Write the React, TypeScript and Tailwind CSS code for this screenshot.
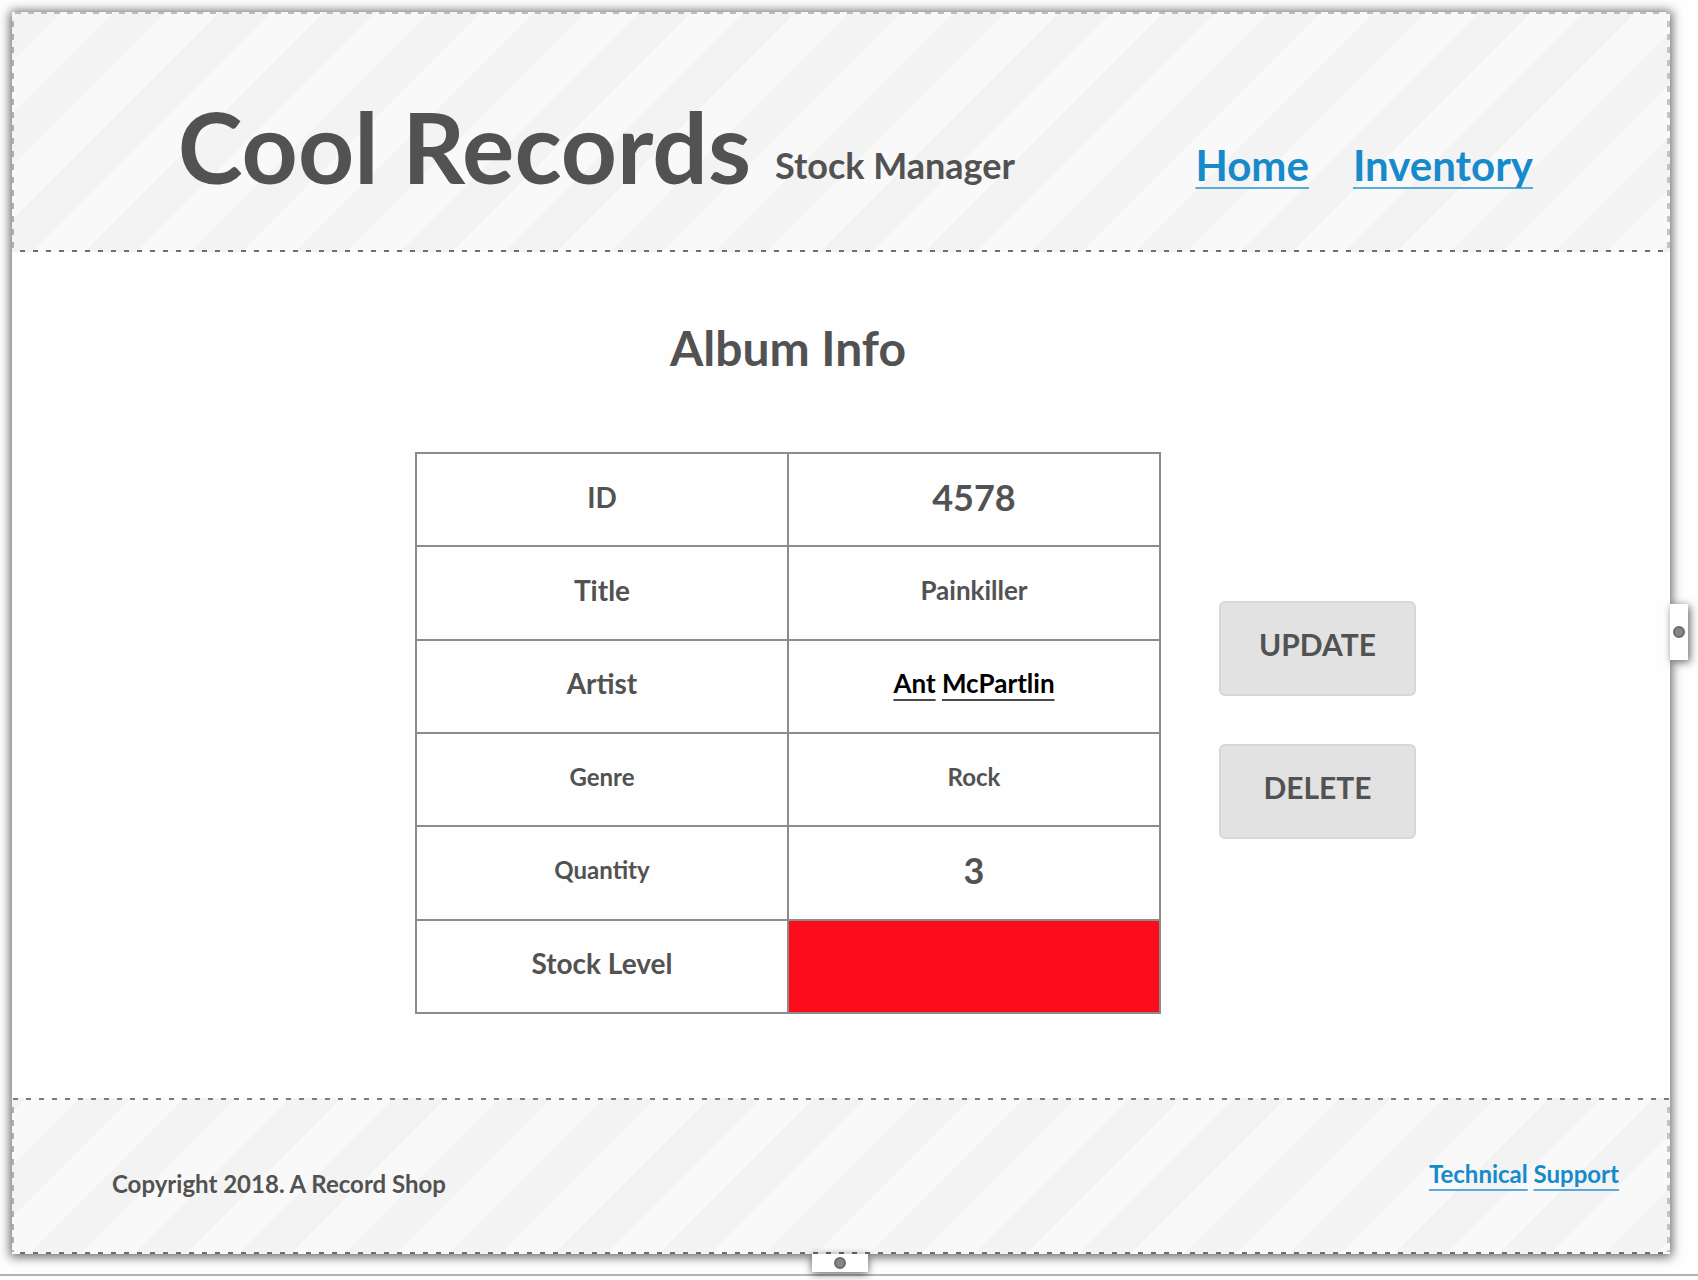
import type { ReactNode } from "react";

const rows: { label: string; labelClass: string; value: ReactNode; valueClass: string }[] = [
  { label: "ID", labelClass: "text-[28px]", value: "4578", valueClass: "text-[36px]" },
  { label: "Title", labelClass: "text-[28px]", value: "Painkiller", valueClass: "text-[26px]" },
  {
    label: "Artist",
    labelClass: "text-[28px]",
    value: <WordLink href="#artist" words={["Ant", "McPartlin"]} />,
    valueClass: "text-[26px] text-black",
  },
  { label: "Genre", labelClass: "text-[24px]", value: "Rock", valueClass: "text-[24px]" },
  { label: "Quantity", labelClass: "text-[24px]", value: "3", valueClass: "text-[36px]" },
  { label: "Stock Level", labelClass: "text-[28px]", value: "", valueClass: "bg-[#fd0d1b]" },
];

/* A link whose words are underlined one by one. */
function WordLink({ href, words }: { href: string; words: string[] }) {
  return (
    <a href={href}>
      {words.map((word, i) => (
        <span key={word}>
          {i > 0 && " "}
          <span className="underline decoration-current/70 decoration-2 underline-offset-[6px] [text-decoration-skip-ink:none]">
            {word}
          </span>
        </span>
      ))}
    </a>
  );
}

/* Dashed hairlines on the edges of a striped band. */
function Edges({ top, bottom }: { top: string; bottom: string }) {
  return (
    <div aria-hidden="true" className="pointer-events-none absolute inset-0 flex flex-col justify-between">
      <div className={"h-[2px] " + top} />
      <div className="flex flex-1 justify-between">
        <div className="w-[2px] bg-[repeating-linear-gradient(to_bottom,transparent_0_7px,#b0b0b0_7px_13px)]" />
        <div className="w-[3px] bg-[repeating-linear-gradient(to_bottom,transparent_0_7px,#c4c4c4_7px_13px)]" />
      </div>
      <div className={"h-[2px] " + bottom} />
    </div>
  );
}

const dashLight = "bg-[repeating-linear-gradient(to_right,transparent_0_3px,#bcbcbc_3px_9px,transparent_9px_13px)]";
const dashDark = "bg-[repeating-linear-gradient(to_right,transparent_0_8px,#6e6e6e_8px_13px)]";
const dashMid = "bg-[repeating-linear-gradient(to_right,transparent_0_1px,#7c7c7c_1px_6px,transparent_6px_13px)]";

function Grip() {
  return <span className="size-3 rounded-full border-2 border-[#6a6a6a] bg-[#868686]" />;
}

export default function App() {
  return (
    <div className="flex min-h-screen flex-col bg-[#fefefe] font-['Lato',sans-serif] font-bold text-[#525252]">
      <div className="relative mt-3 mr-7 mb-5 ml-3 flex flex-1 flex-col bg-[#fefefe] shadow-[0_1px_10px_2px_rgba(0,0,0,0.6)]">
        <header className="relative flex h-[240px] items-start bg-[linear-gradient(135deg,#f3f3f3_25%,#f9f9f9_25%_50%,#f3f3f3_50%_75%,#f9f9f9_75%)] bg-[length:105px_105px] bg-[position:-3px_0px] pt-[74px] pr-[137px] pl-[10%]">
          <Edges top={dashLight} bottom={dashDark} />
          <h1 className="text-[98px] leading-[120px] whitespace-nowrap">Cool Records</h1>
          <div className="mt-[49px] ml-6 flex flex-1 justify-between leading-[60px] whitespace-nowrap">
            <p className="text-[36px]">Stock Manager</p>
            <nav className="flex gap-11 text-[42px] text-[#168acb]">
              <WordLink href="#home" words={["Home"]} />
              <WordLink href="#inventory" words={["Inventory"]} />
            </nav>
          </div>
        </header>

        <main className="grid flex-1 grid-cols-[403fr_746fr_58fr_197fr_254fr] content-start pt-[60px]">
          <h2 className="col-start-2 mb-[68px] text-center text-[48px] leading-[72px]">Album Info</h2>
          <table className="col-start-2 row-start-2 h-[562px] w-full table-fixed border-collapse text-center">
            <tbody>
              {rows.map((row) => (
                <tr key={row.label} className="h-[93px]">
                  <th scope="row" className={"border-2 border-[#8c8c8c] pb-1.5 leading-9 font-bold " + row.labelClass}>
                    {row.label}
                  </th>
                  <td className={"border-2 border-[#8c8c8c] pb-1.5 leading-9 " + row.valueClass}>{row.value}</td>
                </tr>
              ))}
            </tbody>
          </table>
          <div className="col-start-4 row-start-2 mt-[149px] flex flex-col gap-12 text-[30px]">
            <button type="button" className="h-[95px] rounded-md border-2 border-[#d7d7d7] bg-[#e2e2e2] pb-2">
              UPDATE
            </button>
            <button type="button" className="h-[95px] rounded-md border-2 border-[#d7d7d7] bg-[#e2e2e2] pb-2">
              DELETE
            </button>
          </div>
        </main>

        <footer className="relative flex h-[156px] items-start justify-between bg-[linear-gradient(135deg,#f3f3f3_25%,#f9f9f9_25%_50%,#f3f3f3_50%_75%,#f9f9f9_75%)] bg-[length:105px_105px] bg-[position:67px_0px] pr-[51px] pl-[100px] text-[24px]">
          <Edges top={dashMid} bottom={dashDark} />
          <p className="mt-[68px] slashed-zero">Copyright 2018. A Record Shop</p>
          <p className="mt-[58px] text-[#168acb]">
            <WordLink href="#support" words={["Technical", "Support"]} />
          </p>
        </footer>

        <div className="absolute top-[592px] left-full flex h-14 w-[18px] items-center justify-center bg-white shadow-[2px_2px_8px_rgba(0,0,0,0.6)]">
          <Grip />
        </div>
        <div className="absolute top-full left-[800px] flex h-[18px] w-14 items-center justify-center bg-white shadow-[0_2px_8px_rgba(0,0,0,0.6)]">
          <Grip />
        </div>
      </div>
      <div className="mb-1 h-[2px] bg-[#b3b3b3]" />
    </div>
  );
}
